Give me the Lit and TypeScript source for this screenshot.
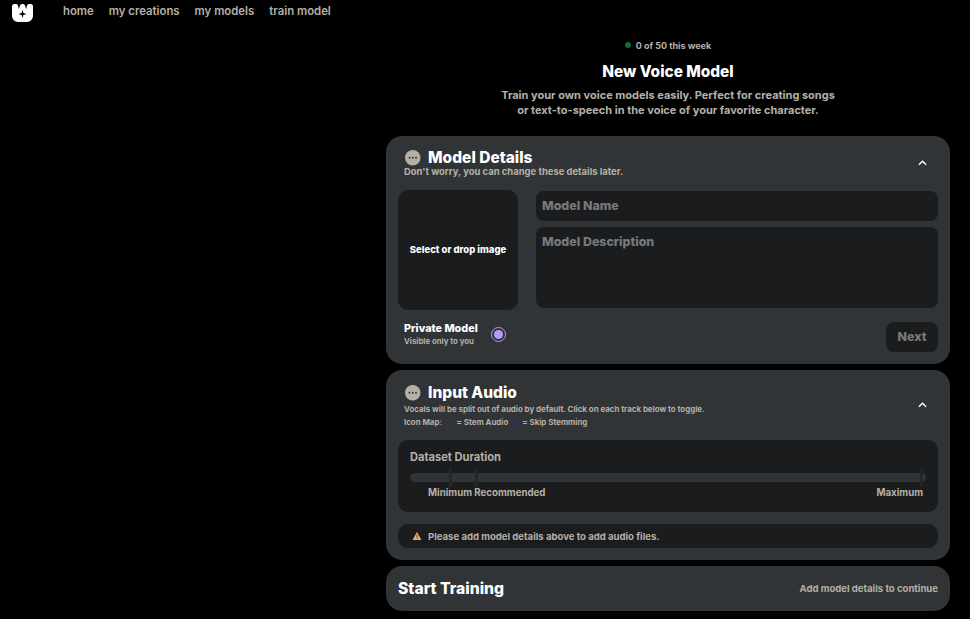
import { LitElement, html, css } from "lit";
import { customElement } from "lit/decorators.js";

const dots = html`<svg class="dots" viewBox="0 0 16 16"><circle cx="8" cy="8" r="8" fill="#b5b0a6"/><circle cx="4.6" cy="8" r="1" fill="#303437"/><circle cx="8" cy="8" r="1" fill="#303437"/><circle cx="11.4" cy="8" r="1" fill="#303437"/></svg>`;
const chevron = html`<svg class="chev" viewBox="0 0 10 6"><path d="M1 5l4-4 4 4" fill="none" stroke="#fff" stroke-width="1.5"/></svg>`;

@customElement("app-root")
export class AppRoot extends LitElement {
  static styles = css`
    :host { display: block; width: 970px; height: 619px; overflow: hidden; background: #000; font-family: Inter, "Open Sans", sans-serif; font-weight: 700; color: #b5b0a6; box-sizing: border-box; }
    * { box-sizing: border-box; }
    nav { display: flex; align-items: center; height: 22px; padding-left: 12px; }
    .logo { width: 21px; height: 18px; margin: 3px 30px 0 0; flex: none; }
    .links { display: flex; gap: 15px; font-size: 11.35px; font-weight: 600; }
    main { margin-left: 386px; width: 564px; }
    .head { display: flex; flex-direction: column; align-items: center; }
    .quota { display: flex; align-items: center; gap: 5px; height: 12px; margin-top: 17px; font-size: 9px; }
    .dot { width: 6px; height: 6px; border-radius: 50%; background: #0b6e3e; }
    h1 { margin: 10px 0 0; color: #fff; font-size: 15.4px; line-height: 22px; font-weight: 800; }
    .intro { margin: 5px 0 0; font-size: 11px; line-height: 15px; text-align: center; width: 340px; }
    .card { background: #303437; border-radius: 16px; margin-bottom: 6px; position: relative; }
    .card.one { margin-top: 18px; height: 228px; padding: 12px 12px 0; }
    .card.two { height: 190px; padding: 13px 12px 0; }
    .card.three { height: 45px; padding: 0 12px; display: flex; align-items: center; justify-content: space-between; }
    .title { display: flex; align-items: center; gap: 7.5px; padding-left: 7px; height: 20px; color: #fff; font-size: 15.5px; line-height: 16px; font-weight: 800; }
    .dots { width: 15.5px; height: 15.5px; flex: none; }
    .chev { position: absolute; right: 23px; width: 9px; height: 6px; }
    .one .chev { top: 24px; }
    .two .chev { top: 32px; }
    .sub { padding-left: 6px; font-size: 9.45px; line-height: 10px; }
    .one .sub { margin-top: -0.8px; }
    .two .sub { line-height: 13px; font-size: 7.9px; }
    .form { display: flex; gap: 18px; margin-top: 12.8px; }
    .drop { width: 120px; height: 120px; padding-bottom: 1px; border-radius: 10px; background: #1b1c1e; color: #fff; font-size: 9.5px; font-weight: 800; display: flex; align-items: center; justify-content: center; }
    .fields { flex: 1; display: flex; flex-direction: column; gap: 6px; padding-top: 1px; }
    .field { background: #1b1c1e; border-radius: 8px; color: #77797c; font-size: 12.4px; font-weight: 800; padding: 0 6px; }
    .name { height: 30px; display: flex; align-items: center; padding-bottom: 1px; }
    .desc { height: 81px; padding-top: 7px; line-height: 15px; }
    .foot { display: flex; align-items: flex-start; margin-top: 12px; padding-left: 6px; }
    .private { color: #fff; font-size: 10.8px; line-height: 13px; font-weight: 800; }
    .private small { display: block; color: #b5b0a6; font-size: 7.8px; line-height: 12px; font-weight: 700; }
    .radio { width: 15px; height: 15px; margin: 5px 0 0 13.5px; border-radius: 50%; border: 1.5px solid #b79cf5; display: flex; align-items: center; justify-content: center; }
    .radio i { width: 9px; height: 9px; border-radius: 50%; background: #b79cf5; }
    .next { margin-left: auto; width: 52px; height: 30px; padding-bottom: 1px; border-radius: 8px; background: #1b1c1e; color: #77797c; font-size: 12.4px; font-weight: 800; display: flex; align-items: center; justify-content: center; }
    .map { display: flex; align-items: center; }
    .key { width: 7px; height: 7px; flex: none; border-radius: 50%; margin: 0 4.5px 0 3px; border: 1.5px solid #3a3d41; }
    .key.purple { border-color: #3f1c8c; margin: 0 2px 0 5px; }
    .panel { background: #1b1c1e; border-radius: 10px; }
    .duration { height: 72px; margin-top: 11px; padding: 9.5px 12px 0; font-size: 11.1px; }
    .duration .label { line-height: 14px; }
    .track { position: relative; height: 9px; margin-top: 9.5px; width: 516px; border-radius: 5px; background: #303437; }
    .tick { position: absolute; top: -4px; width: 3px; height: 18px; background: #24272a; }
    .tick.min { left: 39px; }
    .tick.rec { left: 65px; }
    .tick.max { left: 510px; }
    .scale { display: flex; justify-content: space-between; margin-top: 5px; padding: 0 3px 0 18px; font-size: 9.7px; line-height: 12px; }
    .warn { display: flex; align-items: center; gap: 6px; height: 24px; margin-top: 12px; padding-left: 14px; font-size: 9.55px; }
    .warn svg { width: 10px; height: 8px; flex: none; }
    .three strong { color: #fff; font-size: 15.7px; font-weight: 800; }
    .three span { font-size: 9.55px; }
  `;

  render() {
    return html`
      <nav>
        <svg class="logo" viewBox="0 0 21 18">
          <path d="M0 2.5A2.5 2.5 0 0 1 2.5 0H4a2 2 0 0 1 2 1.5L6.8 5 8 1.5A2 2 0 0 1 10 0h1a2 2 0 0 1 2 1.5L14.2 5 15 1.5A2 2 0 0 1 17 0h1.5A2.5 2.5 0 0 1 21 2.5V12a6 6 0 0 1-6 6H6a6 6 0 0 1-6-6Z" fill="#fff"/>
          <path d="M10.5 6 11.4 9.1 14.5 10 11.4 10.9 10.5 14 9.6 10.9 6.5 10 9.6 9.1Z" fill="#000"/>
        </svg>
        <div class="links"><span>home</span><span>my creations</span><span>my models</span><span>train model</span></div>
      </nav>
      <main>
        <div class="head">
          <div class="quota"><span class="dot"></span>0 of 50 this week</div>
          <h1>New Voice Model</h1>
          <p class="intro">Train your own voice models easily. Perfect for creating songs or text-to-speech in the voice of your favorite character.</p>
        </div>
        <section class="card one">
          <div class="title">${dots}Model Details</div>
          ${chevron}
          <div class="sub">Don't worry, you can change these details later.</div>
          <div class="form">
            <div class="drop">Select or drop image</div>
            <div class="fields">
              <div class="field name">Model Name</div>
              <div class="field desc">Model Description</div>
            </div>
          </div>
          <div class="foot">
            <div class="private">Private Model<small>Visible only to you</small></div>
            <div class="radio"><i></i></div>
            <div class="next">Next</div>
          </div>
        </section>
        <section class="card two">
          <div class="title">${dots}Input Audio</div>
          ${chevron}
          <div class="sub">Vocals will be split out of audio by default. Click on each track below to toggle.</div>
          <div class="sub map">Icon Map:<span class="key"></span>= Stem Audio<span class="key purple"></span>= Skip Stemming</div>
          <div class="panel duration">
            <div class="label">Dataset Duration</div>
            <div class="track">
              <span class="tick min"></span>
              <span class="tick rec"></span>
              <span class="tick max"></span>
            </div>
            <div class="scale"><span>Minimum Recommended</span><span>Maximum</span></div>
          </div>
          <div class="panel warn">
            <svg viewBox="0 0 11 10"><path d="M5.5 0 11 10H0Z" fill="#f0b060"/><path d="M5 3.5h1V7H5ZM5 7.8h1v1H5Z" fill="#1b1c1e"/></svg>
            Please add model details above to add audio files.
          </div>
        </section>
        <section class="card three"><strong>Start Training</strong><span>Add model details to continue</span></section>
      </main>
    `;
  }
}
